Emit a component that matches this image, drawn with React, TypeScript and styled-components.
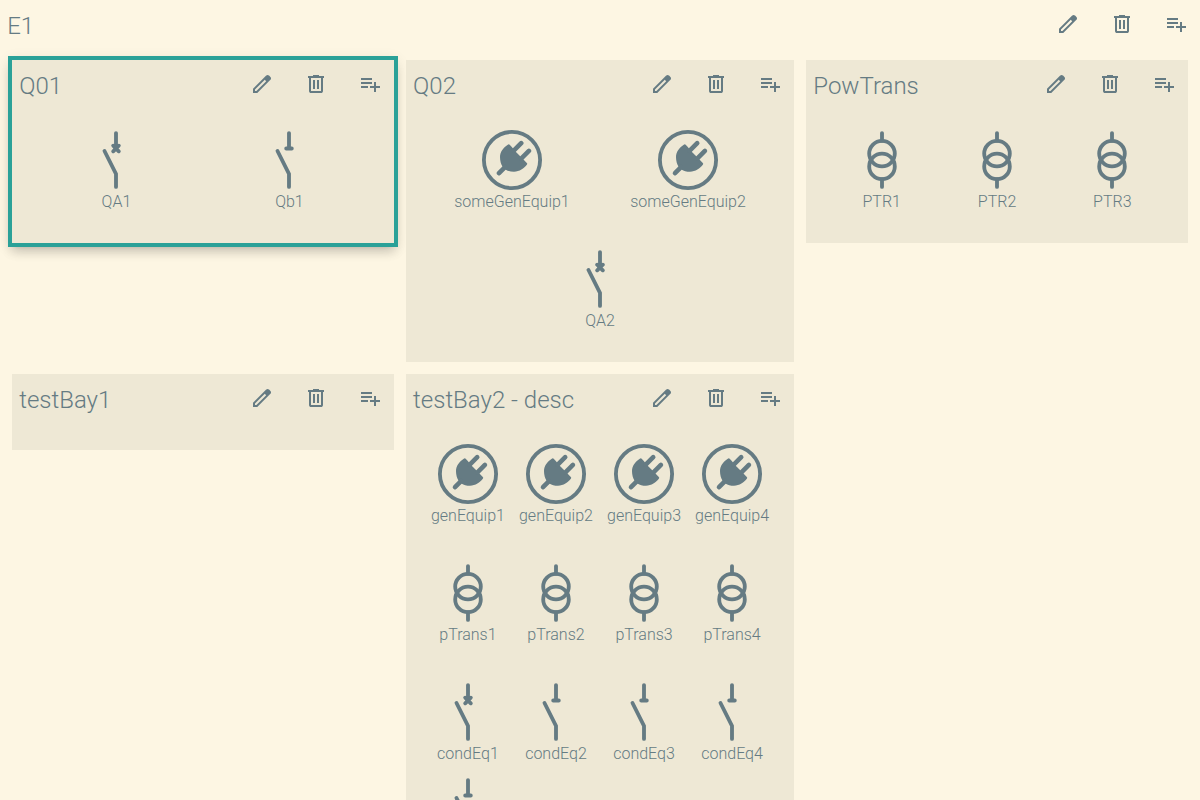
import React from 'react';
import styled, { createGlobalStyle, css } from 'styled-components';

const GlobalStyle = createGlobalStyle`
  html, body { margin: 0; padding: 0; }
  body {
    background: #fdf6e3;
    color: #657b83;
    font-family: Roboto, sans-serif;
    font-weight: 300;
  }
`;

const Page = styled.div`
  height: 800px;
  overflow: hidden;
`;

const Header = styled.header`
  display: flex;
  align-items: flex-start;
  height: 48px;
  padding-left: 7.2px;
`;

const Title = styled.h1`
  flex: 1;
  margin: 0;
  font-size: 24px;
  font-weight: 300;
  line-height: 53px;
  white-space: nowrap;
`;

const Actions = styled.nav`
  display: flex;
  gap: 6px;
`;

const IconButton = styled.button`
  display: flex;
  align-items: center;
  justify-content: center;
  width: 48px;
  height: 48px;
  padding: 0;
  border: 0;
  background: none;
  color: inherit;

  svg { display: block; width: 24px; height: 24px; fill: currentColor; }
`;

const Bays = styled.main`
  display: grid;
  grid-template-columns: 1fr 388.2px 1fr;
  gap: 12px;
  align-items: start;
  padding: 12px;
`;

const Card = styled.section<{ $selected?: boolean }>`
  background: #eee8d5;
  padding-bottom: 20px;
  ${({ $selected }) =>
    $selected &&
    css`
      outline: 4px solid #2aa198;
      box-shadow: 0 8px 10px 1px rgba(0, 0, 0, 0.14), 0 3px 14px 2px rgba(0, 0, 0, 0.12),
        0 5px 5px -3px rgba(0, 0, 0, 0.2);
    `}
`;

const Groups = styled.div`
  display: flex;
  flex-direction: column;
  gap: 12px;
  padding-top: 8px;
`;

const Group = styled.div<{ $columns: number }>`
  display: grid;
  grid-template-columns: repeat(${({ $columns }) => $columns}, minmax(0, 1fr));
  gap: 12px;
  padding: 12px 24px;
`;

const Item = styled.figure`
  display: flex;
  flex-direction: column;
  align-items: center;
  margin: 0;
`;

const Symbol = styled.svg`
  display: block;
  width: 64px;
  height: 64px;
  fill: none;
  stroke: currentColor;
  stroke-width: 3.84;
  stroke-linecap: round;
`;

const Prongs = styled.path`
  stroke-width: 4.6;
`;

const PlugBody = styled.path`
  fill: currentColor;
  stroke: none;
`;

const Label = styled.figcaption`
  font-size: 16px;
  line-height: 19px;
  white-space: nowrap;
`;

type Kind = 'breaker' | 'disconnector' | 'transformer' | 'general';

const shapes: Record<Kind, React.ReactNode> = {
  breaker: <path d="M32 5.1V20.5M29.2 17.7L34.8 23.3M34.8 17.7L29.2 23.3M20.5 23L32 46V58.9" />,
  disconnector: <path d="M32 5.1V20.5M29.2 20.5H34.8M20.5 23L32 46V58.9" />,
  transformer: (
    <>
      <path d="M32 5.1V12.8M32 51.2V58.9" />
      <circle cx="32" cy="25.6" r="12.8" />
      <circle cx="32" cy="38.4" r="12.8" />
    </>
  ),
  general: (
    <>
      <circle cx="32" cy="32" r="28.1" />
      <PlugBody d="M29.7 16.7Q28.8 15.8 27.8 16.7C23 20 20 24 20 29C20 33 21 36.3 22.6 38.8L25.4 41.4C27.8 43 30.5 43.7 34 43.7C39.5 43.7 44 40.5 47 36.6Q47.6 35.7 46.8 35L44.4 32.4L41 29L35 23L31.8 19Z" />
      <Prongs d="M41.2 15.2L33.5 22.9M48.9 22.9L41.2 30.6M19 45.2L25 39.2" />
    </>
  ),
};

const Toolbar = () => (
  <Actions>
    <IconButton aria-label="Edit">
      <svg viewBox="0 0 24 24">
        <path d="M5 19h1.425L16.2 9.225L14.775 7.8L5 17.575zm-2 2v-4.25L16.2 3.575q.3-.275.663-.425t.762-.15t.775.15t.65.45L20.425 5q.3.275.438.65T21 6.4q0 .4-.137.763t-.438.662L7.25 21zM19 6.4L17.6 5zm-3.525 2.125l-.7-.725L16.2 9.225z" />
      </svg>
    </IconButton>
    <IconButton aria-label="Delete">
      <svg viewBox="0 0 24 24">
        <path d="M7 21q-.825 0-1.412-.587T5 19V6H4V4h5V3h6v1h5v2h-1v13q0 .825-.587 1.413T17 21zM17 6H7v13h10zM9 17h2V8H9zm4 0h2V8h-2zM7 6v13z" />
      </svg>
    </IconButton>
    <IconButton aria-label="Add">
      <svg viewBox="0 0 24 24">
        <path d="M14 10H3v2h11v-2zm0-4H3v2h11V6zm4 8v-4h-2v4h-4v2h4v4h2v-4h4v-2h-4zM3 16h7v-2H3v2z" />
      </svg>
    </IconButton>
  </Actions>
);

interface Equipment {
  kind: Kind;
  name?: string;
}

interface BayData {
  name: string;
  selected?: boolean;
  groups: Equipment[][];
}

const make = (kind: Kind, ...names: string[]): Equipment[] => names.map((name) => ({ kind, name }));

const bays: BayData[] = [
  { name: 'Q01', selected: true, groups: [[...make('breaker', 'QA1'), ...make('disconnector', 'Qb1')]] },
  { name: 'Q02', groups: [make('general', 'someGenEquip1', 'someGenEquip2'), make('breaker', 'QA2')] },
  { name: 'PowTrans', groups: [make('transformer', 'PTR1', 'PTR2', 'PTR3')] },
  { name: 'testBay1', groups: [] },
  {
    name: 'testBay2 - desc',
    groups: [
      make('general', 'genEquip1', 'genEquip2', 'genEquip3', 'genEquip4'),
      make('transformer', 'pTrans1', 'pTrans2', 'pTrans3', 'pTrans4'),
      [
        ...make('breaker', 'condEq1'),
        ...make('disconnector', 'condEq2', 'condEq3', 'condEq4'),
        { kind: 'disconnector' },
      ],
    ],
  },
];

const Bay = ({ name, selected, groups }: BayData) => (
  <Card $selected={selected}>
    <Header>
      <Title as="h2">{name}</Title>
      <Toolbar />
    </Header>
    <Groups>
      {groups.map((items, index) => (
        <Group key={index} $columns={Math.min(items.length, 4)}>
          {items.map((item, position) => (
            <Item key={position}>
              <Symbol viewBox="0 0 64 64">{shapes[item.kind]}</Symbol>
              {item.name && <Label>{item.name}</Label>}
            </Item>
          ))}
        </Group>
      ))}
    </Groups>
  </Card>
);

export default function App() {
  return (
    <Page>
      <GlobalStyle />
      <Header>
        <Title>E1</Title>
        <Toolbar />
      </Header>
      <Bays>
        {bays.map((bay) => (
          <Bay key={bay.name} {...bay} />
        ))}
      </Bays>
    </Page>
  );
}
